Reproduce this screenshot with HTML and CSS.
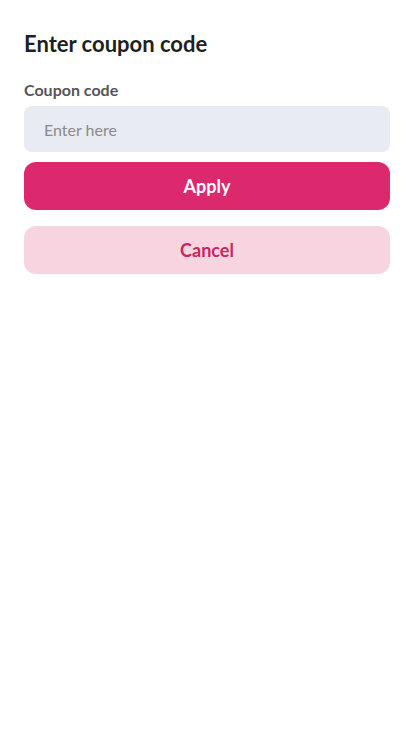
FILE: index.html
```html
<!DOCTYPE html>
<html>
<head>
    <title>Enter coupon code</title>
    <link rel="stylesheet" href="styles.css">
</head>
<body>
    <div class="coupon-sheet">
        <h1 class="sheet-title">Enter coupon code</h1>
        <form class="coupon-form">
            <label for="couponInput" class="field-label">Coupon code</label>
            <input type="text" id="couponInput" class="coupon-input" placeholder="Enter here">
            <button type="submit" class="btn btn-apply">Apply</button>
            <button type="button" class="btn btn-cancel">Cancel</button>
        </form>
    </div>
</body>
</html>
```

FILE: styles.css
```css
/* Coupon sheet */
body {
    font-family: 'Lato', 'Noto Sans', sans-serif;
    background-color: #fff;
    color: #222;
    margin: 0;
}

.coupon-sheet {
    padding: 30px 24px 24px;
}

.sheet-title {
    font-size: 22px;
    font-weight: 700;
    line-height: 28px;
    margin: 0 0 22px;
    color: #1f1f1f;
}

.coupon-form {
    display: flex;
    flex-direction: column;
}

.field-label {
    font-size: 16px;
    font-weight: 700;
    line-height: 20px;
    color: #555;
    margin-bottom: 6px;
}

.coupon-input {
    height: 46px;
    padding: 0 20px;
    border: none;
    border-radius: 8px;
    background-color: #e8ebf2;
    font-family: inherit;
    font-size: 16px;
    color: #333;
    box-sizing: border-box;
    margin-bottom: 10px;
}

.coupon-input::placeholder {
    color: #8a8a8a;
}

.btn {
    height: 48px;
    border: none;
    border-radius: 12px;
    font-family: inherit;
    font-size: 18px;
    font-weight: 700;
    cursor: pointer;
}

.btn-apply {
    background-color: #dc286c;
    color: #fff;
    margin-bottom: 16px;
}

.btn-cancel {
    background-color: #f8d4e1;
    color: #c8285f;
}
```
